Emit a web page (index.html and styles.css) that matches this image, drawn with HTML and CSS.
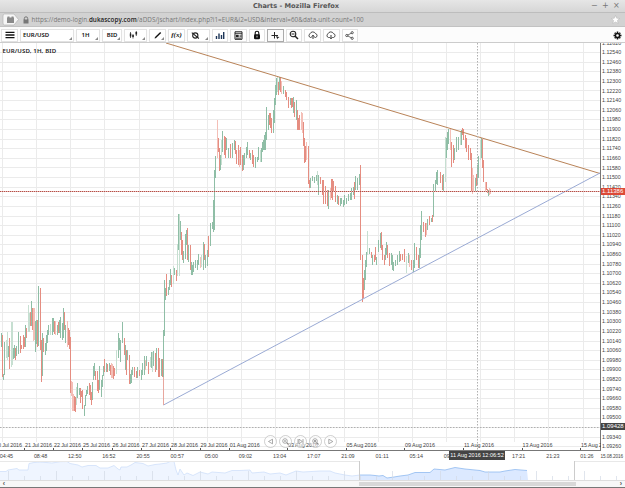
FILE: index.html
```html
<!DOCTYPE html>
<html lang="en">
<head>
<meta charset="utf-8">
<title>Charts</title>
<link rel="stylesheet" href="styles.css">
</head>
<body>
<div class="window">
  <header class="titlebar">
    <span class="title">Charts - Mozilla Firefox</span>
    <span class="controls"><i>−</i><i>+</i><i>×</i></span>
  </header>
  <div class="addressbar">
    <span class="identity"><svg width="18" height="13" viewBox="0 0 18 13"><path d="M2.500 1H12L16.500 6.500 12 12H2.500Q1 12 1 10V3Q1 1 2.500 1Z" fill="#f6f6f6" stroke="#b5b5b5" stroke-width=".7"/><path d="M5 4.500H12V10H5ZM5.500 3.500H7.500V5H5.500ZM9.500 3.500H11.500V5H9.500Z" fill="#8a8a8a"/></svg></span>
    <svg class="padlock" width="6" height="8" viewBox="0 0 6 8"><path d="M1.300 4V2.500a1.700 1.700 0 0 1 3.400 0V4" fill="none" stroke="#777"/><path d="M.5 3.500h5V7.500h-5z" fill="#777"/></svg>
    <span class="url">https://demo-login.<b>dukascopy.com</b>/aDDS/jschart/index.php?i1=EUR&amp;i2=USD&amp;interval=60&amp;data-unit-count=100</span>
    <svg class="star" width="9" height="9" viewBox="0 0 9 9"><path d="M4.500.5 5.700 3.200 8.600 3.500 6.400 5.400 7.100 8.400 4.500 6.900 1.900 8.400 2.600 5.400.4 3.500 3.300 3.200Z" fill="#fff" stroke="#aaa" stroke-width=".4"/></svg>
  </div>
  <nav class="toolbar">
    <button class="w-menu"><svg width="10" height="8" viewBox="0 0 10 8"><path d="M.5 1.300H9.500M.5 4H9.500M.5 6.700H9.500" stroke="#111" stroke-width="1.300"/></svg></button>
    <button class="w-symbol more"><span>EUR/USD</span></button>
    <button class="w-period more"><span>1H</span></button>
    <button class="w-side more"><span>BID</span></button>
    <button class="w-type more"><svg width="9" height="8" viewBox="0 0 9 8"><path d="M1.500 1V7M4 3V7.500M7.300 0V5" stroke="#222" stroke-width=".7"/><path d="M.8 2.500h1.500v3H.8zM3.300 4h1.500v2H3.300zM6.500 1h1.600v2.500H6.500z" fill="#222"/></svg></button>
    <button class="w-draw more"><svg width="8" height="8" viewBox="0 0 8 8"><path d="M1.300 6.700 6.700 1.400" stroke="#111" stroke-width="1.400"/><path d="M.6 7.400 1 5.900 2.200 7Z" fill="#111"/></svg></button>
    <button class="w-fx"><em>f(x)</em></button>
    <button class="w-none more"><svg width="9" height="9" viewBox="0 0 9 9"><circle cx="4.300" cy="4.500" r="2.600" fill="none" stroke="#222" stroke-width="1.100"/><path d="M.8 1.600 7.900 7.500" stroke="#222" stroke-width="1.100"/></svg></button>
    <button class="tool"><svg width="10" height="9" viewBox="0 0 10 9"><path d="M1.500 8V5M4 8V2.500M6.500 8V4M8.700 8V1" stroke="#1d3557" stroke-width="1.400"/></svg></button>
    <button class="tool"><svg width="9" height="9" viewBox="0 0 9 9"><path d="M1 .8H8V8.300H1Z" fill="none" stroke="#222"/><path d="M1 2.400H8M5.500 4.200H7.500M5.500 5.700H7.500M2 7.200H7" stroke="#222" stroke-width=".8"/><path d="M2 3.700H4.700V6.200H2Z" fill="#222"/></svg></button>
    <button class="tool"><svg width="8" height="10" viewBox="0 0 8 10"><path d="M2.200 5V3a1.800 1.800 0 0 1 3.600 0V5" fill="none" stroke="#111" stroke-width="1.100"/><rect x="1" y="4.200" width="6" height="5" rx="1.200" fill="#111"/><path d="M4 5.700V7.500" stroke="#fff" stroke-width=".8"/></svg></button>
    <button class="tool active"><svg width="9" height="9" viewBox="0 0 9 9"><path d="M3.500 1V7.500M.5 4.500H7" stroke="#222"/><path d="M5 5 8.500 6.200 7 6.900 6.300 8.300Z" fill="#222"/></svg></button>
    <button class="tool"><svg width="10" height="10" viewBox="0 0 10 10"><circle cx="4" cy="4" r="2.800" fill="none" stroke="#222" stroke-width="1.100"/><path d="M6 6 9 9" stroke="#222" stroke-width="1.500"/><path d="M2.500 4H5.500" stroke="#222"/></svg></button>
    <button class="tool"><svg width="10" height="9" viewBox="0 0 10 9"><path d="M3.500 6.500H2.500A2 2 0 0 1 2 2.800 3 3 0 0 1 7.500 2.600 2 2 0 0 1 7.500 6.500H6.500" fill="none" stroke="#222" stroke-width=".8"/><path d="M5 8V4.500M3.600 5.700 5 4.200 6.400 5.700" fill="none" stroke="#222" stroke-width=".9"/></svg></button>
    <button class="tool"><svg width="10" height="9" viewBox="0 0 10 9"><path d="M3.500 6.500H2.500A2 2 0 0 1 2 2.800 3 3 0 0 1 7.500 2.600 2 2 0 0 1 7.500 6.500H6.500" fill="none" stroke="#222" stroke-width=".8"/><path d="M5 4V7.500M3.600 6.300 5 7.800 6.400 6.300" fill="none" stroke="#222" stroke-width=".9"/></svg></button>
    <button class="tool"><svg width="9" height="9" viewBox="0 0 9 9"><path d="M7 1.800 2 4.500 7 7.200" fill="none" stroke="#333" stroke-width=".7"/><g fill="#fff" stroke="#333" stroke-width=".8"><circle cx="7.200" cy="1.700" r="1.100"/><circle cx="1.800" cy="4.500" r="1.100"/><circle cx="7.200" cy="7.300" r="1.100"/></g></svg></button>
    <svg class="gear" width="9" height="9" viewBox="-4.500 -4.500 9 9"><circle r="2.100" fill="none" stroke="#111" stroke-width="1.500"/><path d="M0-4V-2.500M0 4V2.500M-4 0H-2.500M4 0H2.500M-2.800-2.800-1.900-1.900M2.800 2.800 1.900 1.900M2.800-2.800 1.900-1.900M-2.800 2.800-1.900 1.900" stroke="#111" stroke-width="1.500"/></svg>
  </nav>
  <main class="workspace">
    <section class="plot">
      <svg id="chart" width="601" height="408" viewBox="0 43 601 408"></svg>
      <h1 class="legend">EUR/USD, 1H, BID</h1>
      <div class="nav-buttons">
        <svg viewBox="0 0 13 13"><circle cx="6.500" cy="6.500" r="6"/><path d="M8.500 4.200V8.800L4.500 6.500Z"/></svg>
        <svg viewBox="0 0 13 13"><circle cx="6.500" cy="6.500" r="6"/><circle cx="6" cy="6" r="2.300"/><path d="M7.700 7.700 9.500 9.500M5 6H7" stroke-width="1.100"/></svg>
        <svg viewBox="0 0 13 13"><circle cx="6.500" cy="6.500" r="6"/><path d="M4 4V9M5 4.200V8.800L8.300 6.500ZM9 4V9"/></svg>
        <svg viewBox="0 0 13 13"><circle cx="6.500" cy="6.500" r="6"/><circle cx="6" cy="6" r="2.300"/><path d="M7.700 7.700 9.500 9.500M5 6H7M6 5V7" stroke-width="1.100"/></svg>
        <svg viewBox="0 0 13 13"><circle cx="6.500" cy="6.500" r="6"/><path d="M4.800 4.200V8.800L8.800 6.500Z"/></svg>
      </div>
    </section>
    <aside class="prices">
      <div id="prices"></div>
      <span class="tag last">1.11386</span>
      <span class="tag cursor">1.09428</span>
    </aside>
  </main>
  <div class="times">
    <svg id="times" width="625" height="10" viewBox="0 451 625 10"></svg>
    <span class="stamp">11 Aug 2016 12:06:52</span>
  </div>
  <svg id="overview" width="625" height="19" viewBox="0 461 625 19"></svg>
  <div class="scrollbar"><span class="arrow">‹</span><div class="track"><i class="thumb"></i></div><span class="arrow">›</span></div>
</div>
<script src="chart.js"></script>
</body>
</html>
```
FILE: styles.css
```css
* { box-sizing: border-box; }
body { margin: 0; background: #fff; overflow: hidden; font-family: "Noto Sans", sans-serif; }
.window { width: 625px; height: 488px; display: flex; flex-direction: column; border-bottom: 1px solid #777; }
svg { display: block; flex: none; }
.titlebar { height: 13px; flex: none; display: flex; align-items: center; background: linear-gradient(#e6e6e6, #d6d6d6); border-bottom: 1px solid #bdbdbd; }
.title { flex: 1; text-align: center; font: bold 6.600px/12px "DejaVu Sans", sans-serif; color: #555; }
.controls { display: flex; gap: 5px; width: 34px; margin-left: -1px; font: 8px/12px "DejaVu Sans", sans-serif; color: #777; }
.controls i { font-style: normal; width: 6px; text-align: center; }
.addressbar { height: 14px; flex: none; display: flex; align-items: center; background: #d2d2d2; border-bottom: 1px solid #c2c2c2; padding: 0 5px 0 2px; }
.padlock { margin: 0 3px 0 2.500px; }
.url { font: 6.300px/13px "Open Sans", sans-serif; color: #777; white-space: nowrap; letter-spacing: .05px; }
.url b { color: #222; font-weight: 600; }
.star { margin-left: auto; }
.toolbar { height: 16px; flex: none; display: flex; align-items: center; gap: 2px; padding: 1px 3px 0 1px; background: #fcfcfc; border-bottom: 1px solid #ccc; }
button { position: relative; flex: none; width: 16.600px; height: 13px; padding: 0; display: flex; align-items: center; justify-content: center; background: #fff; border: 1px solid #e2e2e2; font: 600 6px/11px "Noto Sans", sans-serif; color: #111; }
.more::after { content: ""; position: absolute; right: 1px; bottom: 1px; border: solid transparent; border-width: 3px 0 0 3px; border-right: 3px solid #888; border-left: 0; border-bottom: 0; }
.w-menu { width: 17px; }
.w-symbol { width: 54px; justify-content: flex-start; padding-left: 2px; }
.w-period { width: 24px; padding-right: 5px; }
.w-side { width: 20px; }
.w-type { width: 23px; padding-right: 5px; }
.w-draw { width: 17px; }
.w-fx { width: 17px; }
.w-none { width: 22.500px; padding-right: 6px; }
.w-fx em { font: italic bold 7px/11px "Liberation Serif", serif; }
.tool.active { border-color: #aaa; background: #fafafa; }
.gear { margin-left: auto; }
.workspace { height: 408px; flex: none; display: flex; }
.plot { position: relative; width: 601px; height: 408px; overflow: hidden; }
.legend { position: absolute; left: 2.500px; top: 3px; margin: 0; font: 600 6.100px/10px "Noto Sans", sans-serif; color: #222; letter-spacing: .12px; }
.nav-buttons { position: absolute; left: 263.500px; top: 391.500px; display: flex; gap: 2.200px; }
.nav-buttons svg { width: 13px; height: 13px; fill: #fff; fill-opacity: .5; stroke: #888; stroke-width: .7; }
.nav-buttons circle:first-child { stroke: #bbb; }
.prices { position: relative; width: 24px; height: 408px; overflow: hidden; font: 5.300px/9.620px "Liberation Sans", sans-serif; color: #444; }
#prices { display: flex; flex-direction: column; margin-top: -4.400px; padding-left: 1px; }
#prices span { flex: none; height: 9.620px; }
.tag { position: absolute; left: 0; width: 24px; height: 7px; padding-left: 1px; color: #fff; font: 6px/7px "Liberation Sans", sans-serif; }
.last { top: 145px; background: #dc4a38; }
.cursor { top: 380px; background: #444; }
.times { position: relative; height: 10px; flex: none; }
.stamp { position: absolute; left: 449px; top: 0; width: 56px; height: 9px; background: #444; color: #fff; text-align: center; font: 5.500px/9px "Liberation Sans", sans-serif; white-space: nowrap; }
.scrollbar { height: 7px; flex: none; display: flex; background: #f7f7f7; border-top: 1px solid #ddd; }
.arrow { width: 8px; text-align: center; font: bold 7px/5px "Liberation Sans", sans-serif; color: #555; }
.track { flex: 1; padding: 1px 0 0 351px; }
.thumb { display: block; width: 217px; height: 4px; background: #d8d8d8; }
svg text { font-family: "Liberation Sans", sans-serif; font-size: 5.400px; fill: #444; }
svg text.end-date { font-size: 4.700px; }
```
FILE: chart.js
```js
// Bars: x, high, low (screen units); g/r up and down, G/R weak up and down.
const BARS = `g1,333,347 r2,335,377 g3,374,380 g4,342,375 G6,340,358 G7,332,360 g8,346,357 r9,338,369 G11,322,367 G12,322,365 g13,348,359 g14,345,358 r15,348,360 g16,346,356 g18,332,354 r20,336,353 r21,345,349 r23,335,349 r24,337,347 g25,325,347 r26,328,338 G28,305,332 G29,313,332 r30,312,326 g31,301,326 r32,308,330 R33,308,341 R34,308,340 g35,321,352 g36,320,344 r37,320,347 g38,286,346 r40,288,350 r41,340,382 g42,333,376 r43,338,352 g45,343,355 g46,335,351 g47,330,343 g48,325,335 G50,324,335 g52,318,335 g53,318,332 r54,321,334 R55,321,335 g57,325,335 r58,322,333 g59,320,333 g60,317,338 g62,323,340 g63,308,338 r64,312,330 g65,325,343 R67,321,347 r68,328,345 r69,330,349 r70,337,393 R71,381,396 R72,382,411 R73,394,411 r74,396,411 r75,397,412 G76,387,405 g77,383,398 g79,388,395 r80,388,403 r81,391,397 r82,390,409 g84,405,416 g85,395,406 g86,390,396 g87,386,394 r89,383,395 r90,385,400 r91,392,405 g92,382,400 g93,366,380 g94,363,376 r95,371,380 r97,371,391 r98,380,393 g99,366,390 g101,380,397 g102,375,387 g103,366,376 r104,359,372 g106,363,372 r107,364,372 g109,363,371 r110,365,375 R111,363,378 R112,364,378 r113,366,379 r114,368,376 G116,350,374 g118,333,358 g119,338,350 g120,340,362 g122,322,343 r124,338,355 g125,345,370 r126,350,375 g127,350,360 r129,355,384 g130,374,384 g131,370,383 g132,367,375 r134,367,377 r136,371,378 g137,367,378 r139,370,376 g141,370,380 g142,363,375 g144,356,375 R145,360,370 g146,356,366 r148,362,374 G150,357,367 g151,352,368 G152,352,372 g153,351,366 r155,353,372 g156,348,370 r158,348,377 r159,358,377 g161,359,376 r162,359,377 g163,330,377 g164,280,336 g165,288,300 r166,274,296 g168,287,295 g169,280,290 g170,269,285 r171,275,287 G173,266,284 g174,268,275 r176,270,281 G177,244,276 g178,214,250 G179,214,276 g180,221,240 r181,232,255 r182,240,260 g183,251,263 g185,234,259 g186,230,245 r187,228,260 g188,245,262 r190,245,270 g191,262,275 g192,265,275 g193,262,272 g195,260,268 g197,260,270 g198,254,265 R200,257,268 G201,255,267 g203,242,270 r204,244,260 g205,255,268 g207,250,266 r208,236,257 g210,223,246 g212,222,229 g213,200,232 g214,170,230 g215,156,178 R217,120,158 r218,138,152 r219,148,171 g220,155,170 G221,140,165 g222,131,152 r224,136,155 r225,137,158 g226,138,150 g228,148,158 r230,144,158 g232,143,158 g234,140,150 r235,141,154 r236,150,164 r238,145,165 R239,150,167 r240,147,165 r242,155,171 g243,155,170 g244,153,165 g246,147,158 g247,142,155 r249,150,158 g250,153,160 r252,150,164 r253,155,167 g255,157,168 g257,157,162 g258,147,160 G260,150,162 g261,148,162 g262,142,152 g263,140,150 g264,135,150 g265,132,150 g266,107,140 g268,115,130 r269,113,125 r270,113,128 r271,118,133 g273,110,133 g274,98,123 g275,85,105 g276,78,95 G277,77,92 r278,82,95 g279,77,90 r280,77,92 R281,81,94 g283,86,94 r285,90,97 r286,92,100 r288,97,108 g290,98,105 r291,98,108 r292,98,107 g293,97,113 r294,102,117 g296,100,120 r297,110,130 r298,118,130 r299,115,130 R301,112,130 R302,113,133 r303,122,146 r304,138,163 r305,146,162 R306,142,160 r308,146,184 r309,180,188 g310,178,188 g312,176,181 g314,177,183 g316,175,181 G317,171,185 g318,175,195 r320,177,184 r322,180,195 r323,180,204 r325,186,204 r327,190,206 g328,190,209 R330,188,200 r331,179,198 r332,179,200 r333,181,192 r335,186,202 g337,195,204 r338,196,205 g340,198,206 g341,198,204 g343,200,207 g344,195,205 g346,198,204 g348,194,201 g350,193,200 g351,188,200 g353,187,195 r354,182,199 g355,176,190 g357,178,190 g359,174,185 r360,165,260 r362,255,302 r363,278,298 g364,270,290 g365,260,280 g366,252,267 G367,231,255 g369,248,254 r371,252,258 g372,255,265 r374,255,262 r375,247,260 g376,257,265 g378,240,252 g380,233,248 r381,232,250 r382,245,260 r384,255,265 g385,248,260 g386,242,255 r387,245,258 r389,253,266 g391,253,265 g392,255,270 g393,262,271 g395,260,266 g397,255,265 g399,251,262 r400,254,261 r402,254,260 r404,249,262 G406,256,273 g408,253,263 R409,255,267 r411,260,270 g413,260,272 g414,243,268 r416,247,260 r418,255,268 g419,248,268 g420,225,258 g421,211,240 r423,222,232 r425,223,237 R426,223,235 g427,219,230 r429,216,225 g431,218,222 r432,215,222 g433,184,217 g435,180,192 g436,172,184 g437,170,185 r440,172,183 r442,175,190 g443,174,191 G445,137,182 g446,138,158 g447,132,150 g448,129,144 R450,129,150 r451,142,167 r453,145,163 g454,148,160 g456,137,152 g458,137,150 G460,132,145 g461,130,145 r462,128,135 r463,129,140 r465,135,148 r466,138,152 r468,145,160 r470,148,160 r471,153,191 R472,168,194 R473,175,192 g475,178,192 r476,174,186 g477,165,185 g478,156,178 G480,140,160 g481,138,158 r482,139,168 r483,160,182 R485,182,192 r486,182,190 r487,189,193 g488,190,196 R489,188,195 R490,189,194`.split(' ');
const INK = { g: '#8fbea6', r: '#e58d81', G: '#c6dfd1', R: '#f4bfb7' };

const range = (n, f) => Array.from({ length: n }, (_, i) => f(i));
const STEP_X = 34.15, STEP_Y = 9.62;

function drawChart() {
  const grid = range(18, i => `M${Math.round(2 + i * STEP_X) + .5} 43V442`).join('')
    + range(42, i => `M0 ${Math.round(52 + i * STEP_Y) + .5}H600`).join('');
  const bars = Object.keys(INK).map(k => {
    const d = BARS.filter(b => b[0] === k).map(b => {
      const [x, hi, lo] = b.slice(1).split(',');
      return `M${+x + .5} ${hi}V${lo}`;
    }).join('');
    return `<path d="${d}" stroke="${INK[k]}"/>`;
  }).join('');
  const days = [['20 Jul', -5], ['21 Jul', 25], ['22 Jul', 54], ['25 Jul', 83], ['26 Jul', 112.5], ['27 Jul', 142], ['28 Jul', 171], ['29 Jul', 200.5], ['01 Aug', 229.7], ['03 Aug', 288], ['05 Aug', 346.5], ['09 Aug', 405], ['11 Aug', 464], ['13 Aug', 522.5], ['15 Aug', 581]];
  const dates = days.map(([d, x]) => `<text x="${x}" y="446.800" textLength="${d.includes('Jul') ? 27 : 30}">${d} 2016</text><path d="M${Math.round(x) - .5} 448V451" stroke="#555"/>`).join('');
  document.getElementById('chart').innerHTML = `
    <path d="${grid}" stroke="#ebebeb" fill="none"/>${bars}
    <path d="M166 43 600 173.500" stroke="#b98358" fill="none"/>
    <path d="M163.500 405 600 173" stroke="#9aaad4" fill="none"/>
    <path d="M163.500 377V405" stroke="#e8a79e"/>
    <path d="M0 191.500H600" stroke="#e9b5ae"/><path d="M0 191.500H600" stroke="#b0504a" stroke-dasharray="1 1"/>
    <path d="M477.500 43V450M0 427.500H600" stroke="#b0b0b0" stroke-dasharray="1.500 1.500"/>
    <path d="M600.500 43V450" stroke="#777"/>${dates}<path d="M0 450.500H601" stroke="#777"/>`;
}

function drawPrices() {
  document.getElementById('prices').innerHTML =
    range(43, i => `<span>${(1.1262 - i * .0008).toFixed(5)}</span>`).join('');
}

function drawTimes() {
  const t = ['04:45', '08:48', '12:50', '16:52', '20:55', '00:57', '05:00', '09:02', '13:04', '17:07', '21:09', '01:11', '05:14', '09:16', '', '17:21', '21:23', '01:26'];
  document.getElementById('times').innerHTML = t.map((s, i) => s && `<text x="${(i * STEP_X - .2).toFixed(1)}" y="458" textLength="13.300">${s}</text>`).join('')
    + '<text class="end-date" x="600.500" y="458" textLength="22.500">15.08.2016</text>';
}

function drawOverview() {
  const past = '0,471.500 6,471.500 8,470 17,468.500 19,470 28,470 29,463.500 34,462.500 40,462 52,463 60,461.700 67,461.500 70,463.500 78,465 82,467 88,465.500 96,465.500 100,468 108,468 114,465.500 118,469 120,470 121,467 127,467 131,465 135,462.500 143,463.500 148,466 155,464.500 160,464 167,463 170,461.500 174,461.500 176,470 178,475 180,469 184,475 187,473 193,475.500 200,472 208,474 212,472 225,473 232,470.500 240,470.500 250,470 252,473 264,472 270,474 280,473 286,475 296,471 303,472 320,471 330,471 335,473 345,475 352,476 360,475';
  const recent = '360,475 370,475 375,475.500 379,476 383,475.500 387,478 394,477 400,476 408,475 415,472.500 430,472.500 434,469 445,470 455,467.500 465,469 480,470.500 485,472 500,472 505,471 515,469.500 527,470.500';
  const area = (pts, x0, x1, fill, line) => `<path d="M${x0} 480L${pts}L${x1} 480Z" fill="${fill}"/><polyline points="${pts}" fill="none" stroke="${line}" stroke-width=".8"/>`;
  const ticks = range(39, i => `M${8.5 + i * 16} ${i % 3 ? 476 : 471}V480`).join('');
  document.getElementById('overview').innerHTML =
    area(past, 0, 360, '#eff5ff', '#cfe0fa') + area(recent, 360, 528, '#dce9ff', '#8fbaf0')
    + `<path d="${ticks}" stroke="#d3dae5" stroke-width=".7"/><path d="M0 461.500H360M575 461.500H625" stroke="#e8e8e8"/><path d="M359.500 461V480M574.500 461V480" stroke="#ccc"/>`;
}

drawChart();
drawPrices();
drawTimes();
drawOverview();
```
